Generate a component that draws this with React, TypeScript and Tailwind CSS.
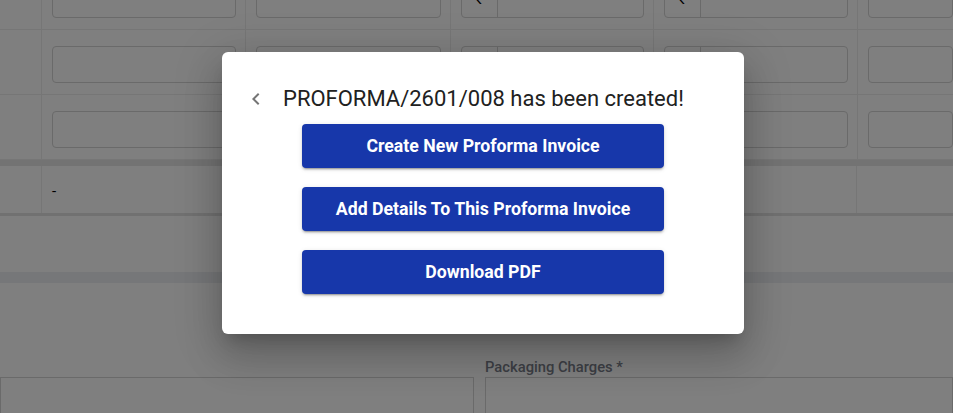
import React from "react";

function ChevronLeft() {
  return (
    <svg width="24" height="24" viewBox="0 0 24 24" fill="#757575">
      <path d="M15.41 7.41 14 6l-6 6 6 6 1.41-1.41L10.83 12z" />
    </svg>
  );
}

function Input({ prefix }: { prefix?: boolean }) {
  return (
    <div className="flex h-[37px] w-full rounded-[4px] border border-[#d4d4d4] bg-white">
      {prefix && (
        <div className="flex w-[36px] items-center justify-center border-r border-[#d4d4d4] text-[15px] text-black">
          ₹
        </div>
      )}
      <div className="flex-1" />
    </div>
  );
}

function Row() {
  return (
    <div className="grid h-[65px] grid-cols-[41px_204px_205px_203px_204px_1fr] border-b border-[#ececec]">
      <div />
      <div className="flex items-start border-l border-[#ececec] pl-[10px] pr-[9px] pt-[16px]">
        <Input />
      </div>
      <div className="flex items-start border-l border-[#ececec] pl-[10px] pr-[9px] pt-[16px]">
        <Input />
      </div>
      <div className="flex items-start border-l border-[#ececec] pl-[10px] pr-[9px] pt-[16px]">
        <Input prefix />
      </div>
      <div className="flex items-start border-l border-[#ececec] pl-[10px] pr-[9px] pt-[16px]">
        <Input prefix />
      </div>
      <div className="flex items-start border-l border-[#ececec] pl-[10px] pt-[16px]">
        <Input />
      </div>
    </div>
  );
}

export default function App() {
  const btn =
    "flex h-[44px] w-[362px] items-center justify-center rounded-[4px] bg-[#1737aa] text-[17.7px] font-bold text-white shadow-[0_3px_1px_-2px_rgba(0,0,0,0.2),0_2px_2px_0_rgba(0,0,0,0.14),0_1px_5px_0_rgba(0,0,0,0.12)]";
  return (
    <div
      className="relative h-[413px] w-[953px] overflow-hidden bg-[#eceef2]"
      style={{ fontFamily: "Roboto, 'Liberation Sans', sans-serif" }}
    >
      {/* page content */}
      <div className="-mt-[35px] bg-white">
        <Row />
        <Row />
        <Row />
        <div className="h-[6px] bg-[#e6e6e6]" />
        <div className="grid h-[47px] grid-cols-[41px_816px_1fr]">
          <div />
          <div className="flex items-center border-l border-r border-[#ececec] pl-[10px] pt-[4px] text-[15px] text-black">
            -
          </div>
          <div />
        </div>
        <div className="h-[3px] bg-[#e3e3e3]" />
        <div className="h-[56px]" />
      </div>
      <div className="h-[11px]" />
      <div className="h-[200px] bg-white">
        <div className="grid grid-cols-[474px_1fr] gap-[11px] pt-[74px]">
          <div className="flex flex-col">
            <div className="h-[20px]" />
            <div className="h-[50px] border border-[#d4d4d4]" />
          </div>
          <div className="flex flex-col">
            <div className="h-[20px] text-[14.75px] font-medium leading-[20px] text-[#7a7f8a]">
              Packaging Charges *
            </div>
            <div className="h-[50px] border border-[#d4d4d4]" />
          </div>
        </div>
      </div>

      {/* overlay */}
      <div className="absolute inset-0 bg-black/50" />

      {/* dialog */}
      <div className="absolute left-[222px] top-[52px] h-[282px] w-[522px] rounded-[6px] bg-white shadow-[0_11px_15px_-7px_rgba(0,0,0,0.2),0_24px_38px_3px_rgba(0,0,0,0.14),0_9px_46px_8px_rgba(0,0,0,0.12)]">
        <div className="mt-[34px] flex h-[26px] items-center pl-[22px]">
          <ChevronLeft />
          <div className="ml-[15px] whitespace-nowrap text-[22px] leading-[26px] text-[#212121]">
            PROFORMA/2601/008 has been created!
          </div>
        </div>
        <div className="mt-[12px] flex flex-col items-center gap-[19px]">
          <button className={btn}>Create New Proforma Invoice</button>
          <button className={btn}>Add Details To This Proforma Invoice</button>
          <button className={btn}>Download PDF</button>
        </div>
      </div>
    </div>
  );
}
